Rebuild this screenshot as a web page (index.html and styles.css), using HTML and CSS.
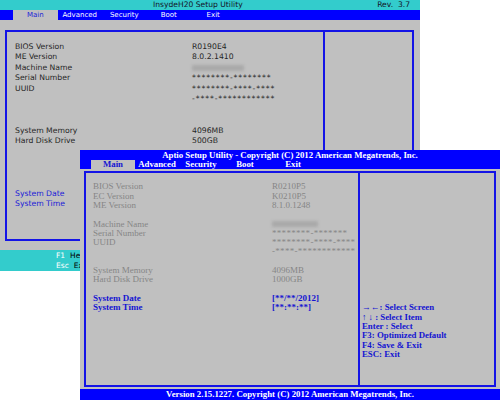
FILE: index.html
```html
<!DOCTYPE html>
<html>
<head>
<meta charset="utf-8">
<link rel="stylesheet" href="styles.css">
</head>
<body>
<div class="desk">
  <div class="win insyde">
    <div class="ins-title"><span class="ins-name">InsydeH20 Setup Utility</span><span class="ins-rev">Rev. &nbsp;3.7</span></div>
    <div class="ins-menu">
      <span class="ins-tab active">Main</span>
      <span class="ins-tab">Advanced</span>
      <span class="ins-tab">Security</span>
      <span class="ins-tab">Boot</span>
      <span class="ins-tab">Exit</span>
    </div>
    <div class="ins-body">
      <div class="ins-frame">
        <div class="ins-main">
          <div class="ins-row"><span class="ins-label">BIOS Version</span><span>R0190E4</span></div>
          <div class="ins-row"><span class="ins-label">ME Version</span><span>8.0.2.1410</span></div>
          <div class="ins-row"><span class="ins-label">Machine Name</span><span class="blur ins-blur"></span></div>
          <div class="ins-row"><span class="ins-label">Serial Number</span><span class="stars">********-********</span></div>
          <div class="ins-row"><span class="ins-label">UUID</span><span class="stars">********-****-****</span></div>
          <div class="ins-row"><span class="ins-label"></span><span class="stars">-****-************</span></div>
          <div class="ins-row"></div>
          <div class="ins-row"></div>
          <div class="ins-row"><span class="ins-label">System Memory</span><span>4096MB</span></div>
          <div class="ins-row"><span class="ins-label">Hard Disk Drive</span><span>500GB</span></div>
          <div class="ins-row"></div>
          <div class="ins-row"></div>
          <div class="ins-row"></div>
          <div class="ins-row"></div>
          <div class="ins-row ins-sel"><span class="ins-label">System Date</span><span></span></div>
          <div class="ins-row ins-sel"><span class="ins-label">System Time</span><span></span></div>
        </div>
        <div class="ins-help"></div>
      </div>
    </div>
    <div class="ins-foot">
      <div class="ins-key-row"><span class="ins-key">F1</span><span class="ins-desc">Help</span></div>
      <div class="ins-key-row"><span class="ins-key">Esc</span><span class="ins-desc">Exit</span></div>
    </div>
  </div>

  <div class="win aptio">
    <div class="apt-title">Aptio Setup Utility - Copyright (C) 2012 American Megatrends, Inc.</div>
    <div class="apt-menu">
      <span class="apt-tab active">Main</span>
      <span class="apt-tab">Advanced</span>
      <span class="apt-tab">Security</span>
      <span class="apt-tab">Boot</span>
      <span class="apt-tab apt-exit">Exit</span>
    </div>
    <div class="apt-body">
      <div class="apt-frame">
        <div class="apt-main">
          <div class="apt-row"><span class="apt-label">BIOS Version</span><span>R0210P5</span></div>
          <div class="apt-row"><span class="apt-label">EC Version</span><span>K0210P5</span></div>
          <div class="apt-row"><span class="apt-label">ME Version</span><span>8.1.0.1248</span></div>
          <div class="apt-row"></div>
          <div class="apt-row"><span class="apt-label">Machine Name</span><span class="blur apt-blur"></span></div>
          <div class="apt-row"><span class="apt-label">Serial Number</span><span class="apt-stars">********-*******</span></div>
          <div class="apt-row"><span class="apt-label">UUID</span><span class="apt-stars">********-****-****</span></div>
          <div class="apt-row"><span class="apt-label"></span><span class="apt-stars">-****-************</span></div>
          <div class="apt-row"></div>
          <div class="apt-row"><span class="apt-label">System Memory</span><span>4096MB</span></div>
          <div class="apt-row"><span class="apt-label">Hard Disk Drive</span><span>1000GB</span></div>
          <div class="apt-row"></div>
          <div class="apt-row apt-sel"><span class="apt-label">System Date</span><span>[**/**/2012]</span></div>
          <div class="apt-row apt-sel"><span class="apt-label">System Time</span><span>[**:**:**]</span></div>
        </div>
        <div class="apt-help">
          <div class="apt-hrow">→←: Select Screen</div>
          <div class="apt-hrow">↑ ↓ : Select Item</div>
          <div class="apt-hrow">Enter : Select</div>
          <div class="apt-hrow">F3: Optimized Default</div>
          <div class="apt-hrow">F4: Save &amp; Exit</div>
          <div class="apt-hrow">ESC: Exit</div>
        </div>
      </div>
    </div>
    <div class="apt-foot">Version 2.15.1227. Copyright (C) 2012 American Megatrends, Inc.</div>
  </div>
</div>
</body>
</html>
```
FILE: styles.css
```css
* { box-sizing: border-box; margin: 0; padding: 0; }
body { margin: 0; background: #ffffff; width: 500px; height: 400px; overflow: hidden; }
.desk { position: relative; width: 500px; height: 400px; }
.win { position: absolute; background: #c0c0c0; display: flex; flex-direction: column; }

/* Insyde (back window) */
.insyde { left: 0; top: 0; width: 420px; height: 271px; font-family: "DejaVu Sans", sans-serif; }
.ins-title { height: 10px; background: #33cccc; display: flex; align-items: center; font-size: 7.6px; line-height: 10px; color: #141428; padding: 0 10px 0 153px; white-space: nowrap; }
.ins-name { flex: 1; }
.ins-menu { height: 10px; background: #0000ff; display: flex; padding-left: 13px; font-size: 7px; line-height: 10px; color: #ffffff; }
.ins-tab { width: 44.5px; text-align: center; }
.ins-tab.active { background: #c0c0c0; color: #1a1ad8; }
.ins-body { flex: 1; display: flex; padding: 10px 6px 9px 5px; }
.ins-frame { flex: 1; display: flex; border: 2px solid #1414e6; }
.ins-main { width: 318px; border-right: 2px solid #1414e6; padding: 9.7px 0 0 8px; font-size: 7.7px; color: #262626; }
.ins-row { display: flex; height: 10.5px; line-height: 10.5px; white-space: nowrap; }
.ins-label { width: 177px; flex: none; }
.ins-sel { color: #1a1ad8; }
.ins-help { flex: 1; }
.stars { letter-spacing: 0.9px; }
.blur { display: inline-block; background: #a9a9a9; filter: blur(1.4px); align-self: center; }
.ins-blur { width: 52px; height: 6px; }
.ins-foot { height: 21px; background: #33cccc; padding: 1px 0 0 56px; font-size: 7.5px; }
.ins-key-row { height: 9.5px; line-height: 9.5px; white-space: nowrap; }
.ins-key { color: #ffffff; margin-right: 5px; }
.ins-desc { color: #000000; }

/* Aptio (front window) */
.aptio { left: 80px; top: 150px; width: 420px; height: 250px; font-family: "Liberation Serif", "DejaVu Serif", serif; }
.apt-title { height: 10px; background: #0000ff; color: #ffffff; font-weight: bold; font-size: 8.8px; line-height: 10px; text-align: center; white-space: nowrap; }
.apt-menu { height: 9px; background: #0000ff; display: flex; padding-left: 11px; font-size: 8.8px; font-weight: bold; line-height: 9px; color: #ffffff; }
.apt-tab { width: 44px; text-align: center; }
.apt-tab.active { background: #c0c0c0; color: #1414d2; }
.apt-exit { margin-left: 4px; }
.apt-body { flex: 1; display: flex; padding: 2px 4px; }
.apt-frame { flex: 1; display: flex; border: 2px solid #1414e6; }
.apt-main { width: 274px; border-right: 2px solid #1414e6; padding: 9.35px 0 0 7px; font-size: 9px; color: #868686; }
.apt-row { display: flex; height: 9.3px; line-height: 9.3px; white-space: nowrap; }
.apt-label { width: 179px; flex: none; }
.apt-stars { letter-spacing: 0.3px; }
.apt-sel { color: #1414d2; font-weight: bold; }
.apt-blur { width: 46px; height: 6px; }
.apt-help { flex: 1; padding: 130.4px 0 0 2px; color: #1414d2; font-weight: bold; font-size: 8.8px; }
.apt-hrow { height: 9.3px; line-height: 9.3px; white-space: nowrap; }
.apt-foot { height: 11px; background: #0000ff; color: #ffffff; font-weight: bold; font-size: 8.8px; line-height: 11px; text-align: center; white-space: nowrap; }
```
